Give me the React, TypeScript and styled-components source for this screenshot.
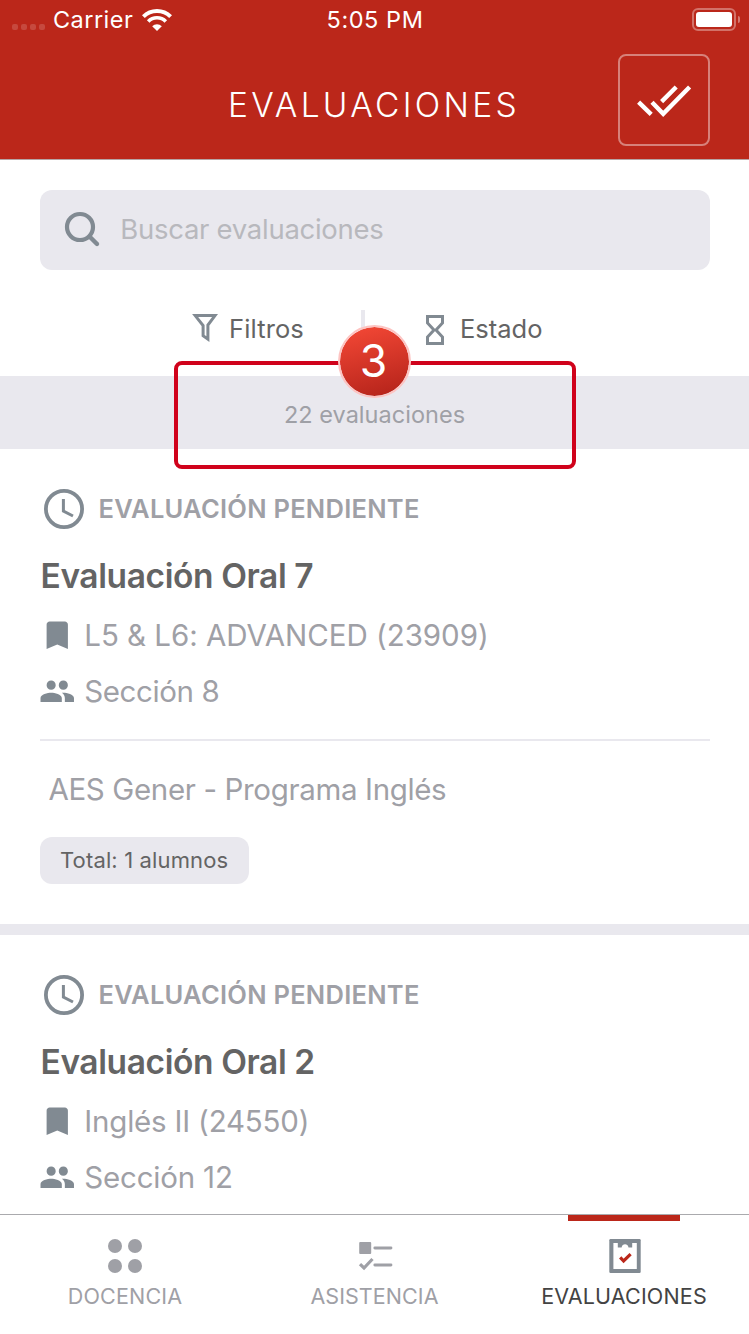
import React from "react";
import styled, { createGlobalStyle } from "styled-components";
import { MdBookmark, MdPeople } from "react-icons/md";

const color = {
  brand: "#bb271a",
  surface: "#e9e8ee",
  icon: "#818a92",
  muted: "#9fa0a6",
  dark: "#646464",
  placeholder: "#b8b8bd",
};

const GlobalStyle = createGlobalStyle`
  * { box-sizing: border-box; }
  body { margin: 0; background: #fff; }
`;

const Screen = styled.div`
  display: flex;
  flex-direction: column;
  width: 749px;
  height: 1334px;
  overflow: hidden;
  background: #fff;
  font-family: Inter, "Liberation Sans", sans-serif;
  font-weight: 400;
  white-space: nowrap;
`;

const Label = styled.span<{ $track?: number }>`
  letter-spacing: ${(p) => p.$track ?? 0}px;
`;

/* Status bar and header */

const StatusBar = styled.div`
  display: grid;
  grid-template-columns: 1fr auto 1fr;
  align-items: center;
  height: 40px;
  padding: 0 10px 1px 12px;
  background: ${color.brand};
  color: #fff;
  font-size: 23.5px;
  line-height: 39px;
`;

const Network = styled.div`
  display: flex;
  align-items: center;
`;

const SignalDots = styled.div`
  display: flex;
  gap: 3px;
  margin: 15px 8px 0 0;
`;

const SignalDot = styled.i`
  width: 6px;
  height: 6px;
  border-radius: 2px;
  background: rgba(255, 255, 255, 0.16);
`;

const WifiIcon = styled.svg`
  margin: 1px 0 0 9px;
`;

const Clock = styled.div`
  margin-left: -1px;
`;

const Battery = styled.div`
  display: flex;
  align-items: center;
  justify-content: flex-end;
  gap: 2px;
  margin-right: -1px;
`;

const BatteryShell = styled.div`
  width: 44px;
  height: 23px;
  padding: 2px;
  border: 2px solid rgba(255, 255, 255, 0.35);
  border-radius: 6px;
`;

const BatteryLevel = styled.div`
  height: 15px;
  border-radius: 3px;
  background: #fff;
`;

const BatteryCap = styled.div`
  width: 2px;
  height: 7px;
  border-radius: 0 2px 2px 0;
  background: rgba(255, 255, 255, 0.38);
`;

const Header = styled.header`
  display: grid;
  grid-template-columns: 1fr auto 1fr;
  align-items: start;
  height: 120px;
  padding: 14px 39px 0;
  border-bottom: 1px solid #b7a5a5;
  background: ${color.brand};
  color: #fff;
`;

const Title = styled.h1`
  grid-column: 2;
  margin: 30px 0 0 -1px;
  font-size: 33.5px;
  font-weight: 350;
  line-height: 42px;
`;

const CheckAllButton = styled.button`
  display: flex;
  justify-self: end;
  width: 92px;
  height: 92px;
  padding: 0;
  border: 2px solid rgba(255, 255, 255, 0.42);
  border-radius: 8px;
  background: none;
`;

/* Search and filters */

const SearchBox = styled.div`
  display: flex;
  flex: none;
  align-items: center;
  height: 80px;
  margin: 30px 39px 0 40px;
  padding: 0 22px;
  border-radius: 12px;
  background: ${color.surface};
  color: ${color.placeholder};
  font-size: 27.5px;
  line-height: 76px;

  svg { flex: none; margin-right: 18.3px; }
  span { margin-bottom: 2px; }
`;

const Filters = styled.div`
  display: flex;
  flex: none;
  height: 106px;
  padding: 40px 0 0 190px;
  color: ${color.dark};
  font-size: 25.5px;
  line-height: 38px;
`;

const Filter = styled.div<{ $width: number; $gap: number }>`
  display: flex;
  width: ${(p) => p.$width}px;

  svg { flex: none; margin-right: ${(p) => p.$gap}px; }
`;

const FilterDivider = styled.div`
  width: 4px;
  height: 40px;
  margin-right: 57px;
  background: ${color.surface};
`;

const CountBand = styled.div`
  position: relative;
  flex: none;
  height: 73px;
  background: ${color.surface};
  color: ${color.muted};
  font-size: 23.5px;
  line-height: 77px;
  text-align: center;
`;

const Highlight = styled.div`
  position: absolute;
  z-index: 1;
  top: -15px;
  left: 174px;
  width: 402px;
  height: 108px;
  border: 4px solid #d0021b;
  border-radius: 8px;
`;

const StepBadge = styled.div`
  position: absolute;
  z-index: 2;
  top: -51px;
  left: 338px;
  width: 73px;
  height: 73px;
  padding-right: 2px;
  border: 2px solid #fdc4c2;
  border-radius: 50%;
  background: linear-gradient(165deg, #f24735 8%, #b4231a 94%) border-box;
  background-clip: padding-box;
  color: #fff;
  font-size: 44.5px;
  line-height: 69px;
`;

/* Evaluation list */

const List = styled.main`
  flex: 1;
  min-height: 0;
  overflow: hidden;
`;

const Card = styled.article`
  padding: 40px 39px 40px 40px;
  border-bottom: 11px solid ${color.surface};
  color: ${color.muted};
  font-size: 29.5px;
`;

const Status = styled.div`
  display: flex;
  align-items: center;
  height: 40px;
  padding-left: 4px;
  font-size: 25.5px;
  font-weight: 600;

  svg { flex: none; margin-right: 14.5px; }
  span { margin-bottom: 2px; }
`;

const CardTitle = styled.h2`
  margin: 27px 0 12px 0.5px;
  color: ${color.dark};
  font-size: 33.5px;
  font-weight: 600;
  line-height: 40px;
`;

const Detail = styled.div`
  display: flex;
  align-items: center;
  height: 56px;

  svg {
    flex: none;
    width: 36.5px;
    height: 36.5px;
    margin: 0 8.6px 2px -0.8px;
    color: ${color.icon};
  }
  span { margin-bottom: 2px; }
`;

const Rule = styled.hr`
  height: 2px;
  margin: 19px 0 28px;
  border: 0;
  background: ${color.surface};
`;

const Company = styled.div`
  padding-left: 8.4px;
  line-height: 40px;
`;

const Total = styled.div`
  width: 209px;
  height: 47px;
  margin-top: 28px;
  padding-left: 20px;
  border-radius: 12px;
  background: ${color.surface};
  color: ${color.dark};
  font-size: 22px;
  line-height: 46px;
`;

/* Tab bar */

const TabBar = styled.nav`
  display: grid;
  flex: none;
  grid-template-columns: 250px 249px 250px;
  height: 120px;
  border-top: 1px solid #aaaaad;
  background: #fff;
`;

const Tab = styled.div<{ $active?: boolean }>`
  display: flex;
  flex-direction: column;
  align-items: center;
  color: ${(p) => (p.$active ? "#434343" : color.muted)};
  font-size: 21.5px;
  line-height: 38px;

  &::before {
    content: "";
    width: 112px;
    height: 6px;
    margin-bottom: 15px;
    background: ${(p) => (p.$active ? color.brand : "transparent")};
  }

  svg { margin-bottom: 1px; }
`;

const ClockIcon = () => (
  <svg width="40" height="40" fill="none" stroke={color.icon}>
    <circle cx="20" cy="20" r="18.1" strokeWidth="3.8" />
    <path d="M19.4 10V22L29 27" strokeWidth="3" />
  </svg>
);

type Evaluation = {
  title: [string, number];
  course: [string, number];
  section: [string, number];
  company?: string;
  total?: string;
};

const evaluations: Evaluation[] = [
  {
    title: ["Evaluación Oral 7", -0.4],
    course: ["L5 & L6: ADVANCED (23909)", -0.04],
    section: ["Sección 8", -0.4],
    company: "AES Gener - Programa Inglés",
    total: "Total: 1 alumnos",
  },
  {
    title: ["Evaluación Oral 2", -0.4],
    course: ["Inglés II (24550)", -0.2],
    section: ["Sección 12", -0.2],
  },
];

const EvaluationCard = ({ title, course, section, company, total }: Evaluation) => (
  <Card>
    <Status>
      <ClockIcon />
      <Label $track={0.26}>EVALUACIÓN PENDIENTE</Label>
    </Status>
    <CardTitle><Label $track={title[1]}>{title[0]}</Label></CardTitle>
    <Detail><MdBookmark /><Label $track={course[1]}>{course[0]}</Label></Detail>
    <Detail><MdPeople /><Label $track={section[1]}>{section[0]}</Label></Detail>
    <Rule />
    {company && <Company><Label $track={-0.35}>{company}</Label></Company>}
    {total && <Total><Label $track={0.14}>{total}</Label></Total>}
  </Card>
);

export default function App() {
  return (
    <Screen>
      <GlobalStyle />
      <StatusBar>
        <Network>
          <SignalDots><SignalDot /><SignalDot /><SignalDot /><SignalDot /></SignalDots>
          <Label $track={0.45}>Carrier</Label>
          <WifiIcon width="30" height="22" viewBox="0 0 30 22" fill="none" stroke="#fff">
            <path d="M1.4 7.6A19.4 19.4 0 0 1 28.6 7.6" strokeWidth="4" />
            <path d="M6.2 12.4A12.4 12.4 0 0 1 23.8 12.4" strokeWidth="3.6" />
            <path d="M15 22L10.2 17.2A6.8 6.8 0 0 1 19.8 17.2Z" fill="#fff" stroke="none" />
          </WifiIcon>
        </Network>
        <Clock><Label $track={0.55}>5:05 PM</Label></Clock>
        <Battery>
          <BatteryShell><BatteryLevel /></BatteryShell>
          <BatteryCap />
        </Battery>
      </StatusBar>
      <Header>
        <Title><Label $track={3.3}>EVALUACIONES</Label></Title>
        <CheckAllButton aria-label="Marcar todas">
          <svg width="88" height="88" fill="none" stroke="#fff" strokeWidth="4.4">
            <path d="M18.6 46.2L31.2 58.4M32 46.2L43.2 57.8L69.6 31M41.6 45.6L56.2 31" />
          </svg>
        </CheckAllButton>
      </Header>

      <SearchBox>
        <svg width="40" height="40" fill="none" stroke={color.icon} strokeWidth="4.2">
          <circle cx="18" cy="17" r="13" />
          <path d="M28 27L35 34" strokeWidth="4.4" strokeLinecap="round" />
        </svg>
        <Label $track={-0.28}>Buscar evaluaciones</Label>
      </SearchBox>

      <Filters>
        <Filter $width={171} $gap={9}>
          <svg width="30" height="40" fill="none" stroke={color.icon} strokeWidth="3">
            <path d="M5.2 5.6H25L17.9 15V29.2L13.1 25.8V15.5Z" />
          </svg>
          <Label $track={0.13}>Filtros</Label>
        </Filter>
        <FilterDivider />
        <Filter $width={160} $gap={8}>
          <svg width="30" height="40" fill="none" stroke={color.icon} strokeWidth="3">
            <path d="M5.5 6.5H20.5V13L14 20L20.5 27V33.5H5.5V27L12 20L5.5 13Z" />
          </svg>
          <Label $track={0}>Estado</Label>
        </Filter>
      </Filters>

      <CountBand>
        <Label $track={0.03}>22 evaluaciones</Label>
        <Highlight />
        <StepBadge>3</StepBadge>
      </CountBand>

      <List>
        {evaluations.map((item) => <EvaluationCard key={item.title[0]} {...item} />)}
      </List>

      <TabBar>
        <Tab>
          <svg width="40" height="40" fill={color.muted}>
            <circle cx="10" cy="10" r="7" /><circle cx="30" cy="10" r="7" />
            <circle cx="10" cy="30" r="7" /><circle cx="30" cy="30" r="7" />
          </svg>
          <Label $track={0.16}>DOCENCIA</Label>
        </Tab>
        <Tab>
          <svg width="40" height="40" fill="none" stroke={color.muted}>
            <rect x="4.2" y="6" width="12" height="12" rx="1" fill={color.muted} stroke="none" />
            <path d="M19.8 12H36M19.8 29H36" strokeWidth="2.8" strokeLinecap="round" />
            <path d="M5 28.2L9 32L17.5 23" strokeWidth="3.2" />
          </svg>
          <Label $track={0.06}>ASISTENCIA</Label>
        </Tab>
        <Tab $active>
          <svg width="40" height="40">
            <rect x="5.3" y="3" width="31.4" height="34" rx="1.2" fill={color.icon} />
            <path d="M9.4 7H13.8V11.4H17.6C18.2 7.2 23.9 7.2 24.5 11.4H28.2V7H32.8V33H9.4Z" fill="#fff" />
            <path d="M16.2 21.4L19.6 25L26.6 18.2" fill="none" stroke={color.brand} strokeWidth="3.2" />
          </svg>
          <Label $track={0.16}>EVALUACIONES</Label>
        </Tab>
      </TabBar>
    </Screen>
  );
}
